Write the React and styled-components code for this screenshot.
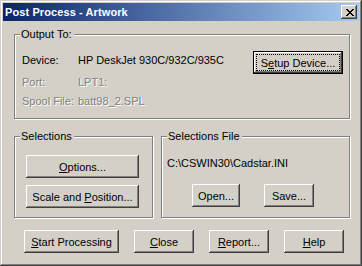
import React from 'react';
import styled, { createGlobalStyle } from 'styled-components';

const GlobalStyle = createGlobalStyle`
  html, body {
    margin: 0;
    padding: 0;
    background: #d4d0c8;
  }
  body {
    font-family: "Liberation Sans", Arial, sans-serif;
    font-size: 11px;
    color: #000;
  }
`;

function CloseGlyph() {
  return (
    <svg width="8" height="7" viewBox="0 0 8 7" shapeRendering="crispEdges">
      <path
        fill="#000"
        d="M0 0h2v1H0zM6 0h2v1H6zM1 1h2v1H1zM5 1h2v1H5zM2 2h4v1H2zM3 3h2v1H3zM2 4h4v1H2zM1 5h2v1H1zM5 5h2v1H5zM0 6h2v1H0zM6 6h2v1H6z"
      />
    </svg>
  );
}

export default function App() {
  return (
    <>
      <GlobalStyle />
      <Window>
        <TitleBar>
          <Title>Post Process - Artwork</Title>
          <CloseBox>
            <CloseGlyph />
          </CloseBox>
        </TitleBar>

        <Body>
          <Group height={85}>
            <GroupLabel>Output To:</GroupLabel>
            <OutputLayout>
              <Fields>
                <FieldRow>
                  <FieldLabel>Device:</FieldLabel>
                  <FieldValue>HP DeskJet 930C/932C/935C</FieldValue>
                </FieldRow>
                <FieldRow gap={9} disabled>
                  <FieldLabel>Port:</FieldLabel>
                  <FieldValue>LPT1:</FieldValue>
                </FieldRow>
                <FieldRow gap={6} disabled>
                  <FieldLabel>Spool File:</FieldLabel>
                  <FieldValue>batt98_2.SPL</FieldValue>
                </FieldRow>
              </Fields>
              <Button width={90} isDefault>
                S<u>e</u>tup Device...
              </Button>
            </OutputLayout>
          </Group>

          <GroupRow>
            <Group height={82}>
              <GroupLabel>Selections</GroupLabel>
              <SelectionsLayout>
                <Button width={113}>
                  <u>O</u>ptions...
                </Button>
                <Button width={113}>
                  Scale and <u>P</u>osition...
                </Button>
              </SelectionsLayout>
            </Group>

            <Group height={82}>
              <GroupLabel>Selections File</GroupLabel>
              <FileLayout>
                <PathText>C:\CSWIN30\Cadstar.INI</PathText>
                <FileButtons>
                  <Button width={48}>Open...</Button>
                  <Button width={50}>Save...</Button>
                </FileButtons>
              </FileLayout>
            </Group>
          </GroupRow>

          <ButtonRow>
            <Button width={95}>
              <u>S</u>tart Processing
            </Button>
            <Button width={60}>
              <u>C</u>lose
            </Button>
            <Button width={60}>
              <u>R</u>eport...
            </Button>
            <Button width={60}>
              <u>H</u>elp
            </Button>
          </ButtonRow>
        </Body>
      </Window>
    </>
  );
}

const Window = styled.div`
  width: 362px;
  height: 266px;
  box-sizing: border-box;
  padding: 3px;
  background: #d4d0c8;
  box-shadow: inset -1px -1px 0 #404040, inset 1px 1px 0 #d4d0c8,
    inset -2px -2px 0 #808080, inset 2px 2px 0 #ffffff;
  display: flex;
  flex-direction: column;
`;

const TitleBar = styled.div`
  height: 18px;
  display: flex;
  align-items: center;
  justify-content: space-between;
  padding: 0 2px;
  background: linear-gradient(to right, #0a246a, #a6caf0);
`;

const Title = styled.span`
  color: #fff;
  font-weight: bold;
  font-size: 11px;
  line-height: 18px;
  letter-spacing: 0.1px;
`;

const CloseBox = styled.div`
  width: 16px;
  height: 14px;
  box-sizing: border-box;
  background: #d4d0c8;
  display: flex;
  align-items: center;
  justify-content: center;
  padding-left: 1px;
  box-shadow: inset -1px -1px 0 #404040, inset 1px 1px 0 #ffffff,
    inset -2px -2px 0 #808080, inset 2px 2px 0 #d4d0c8;
`;

const Body = styled.div`
  display: flex;
  flex-direction: column;
  padding: 13px 9px 0 11px;
`;

const Group = styled.div`
  position: relative;
  box-sizing: border-box;
  height: ${(p) => p.height}px;
  border: 1px solid #808080;
  box-shadow: 1px 1px 0 #ffffff, inset 1px 1px 0 #ffffff;
`;

const GroupLabel = styled.span`
  position: absolute;
  top: -7px;
  left: 5px;
  padding: 0 2px 0 1px;
  line-height: 13px;
  background: #d4d0c8;
  white-space: nowrap;
`;

const OutputLayout = styled.div`
  display: flex;
  justify-content: space-between;
  align-items: flex-start;
  padding: 16px 6px 0 7px;
`;

const Fields = styled.div`
  display: flex;
  flex-direction: column;
  padding-top: 3px;
`;

const FieldRow = styled.div`
  display: flex;
  line-height: 13px;
  margin-top: ${(p) => p.gap || 0}px;
  color: ${(p) => (p.disabled ? '#808080' : '#000')};
  text-shadow: ${(p) => (p.disabled ? '1px 1px 0 #ffffff' : 'none')};
`;

const FieldLabel = styled.span`
  width: 56px;
  white-space: nowrap;
`;

const FieldValue = styled.span`
  white-space: nowrap;
`;

const GroupRow = styled.div`
  display: grid;
  grid-template-columns: 139px 189px;
  column-gap: 8px;
  margin-top: 17px;
`;

const SelectionsLayout = styled.div`
  display: flex;
  flex-direction: column;
  gap: 7px;
  padding: 18px 0 0 11px;
`;

const FileLayout = styled.div`
  display: flex;
  flex-direction: column;
  padding: 20px 0 0 5px;
`;

const PathText = styled.div`
  line-height: 13px;
  white-space: nowrap;
`;

const FileButtons = styled.div`
  display: flex;
  gap: 24px;
  margin-top: 14px;
  padding-left: 25px;
`;

const ButtonRow = styled.div`
  display: flex;
  gap: 15px;
  margin-top: 12px;
  padding-left: 10px;
`;

const Button = styled.button`
  position: relative;
  width: ${(p) => p.width}px;
  height: 23px;
  box-sizing: border-box;
  padding: 0;
  margin: 0;
  font-family: "Liberation Sans", Arial, sans-serif;
  font-size: 11px;
  color: #000;
  background: #d4d0c8;
  white-space: nowrap;
  border: ${(p) => (p.isDefault ? '1px solid #000' : 'none')};
  box-shadow: inset -1px -1px 0 #404040, inset 1px 1px 0 #ffffff,
    inset -2px -2px 0 #808080, inset 2px 2px 0 #d4d0c8;
  outline: none;

  &::after {
    content: '';
    display: ${(p) => (p.isDefault ? 'block' : 'none')};
    position: absolute;
    top: 2px;
    left: 2px;
    right: 2px;
    bottom: 2px;
    border: 1px dotted #000;
  }
`;
